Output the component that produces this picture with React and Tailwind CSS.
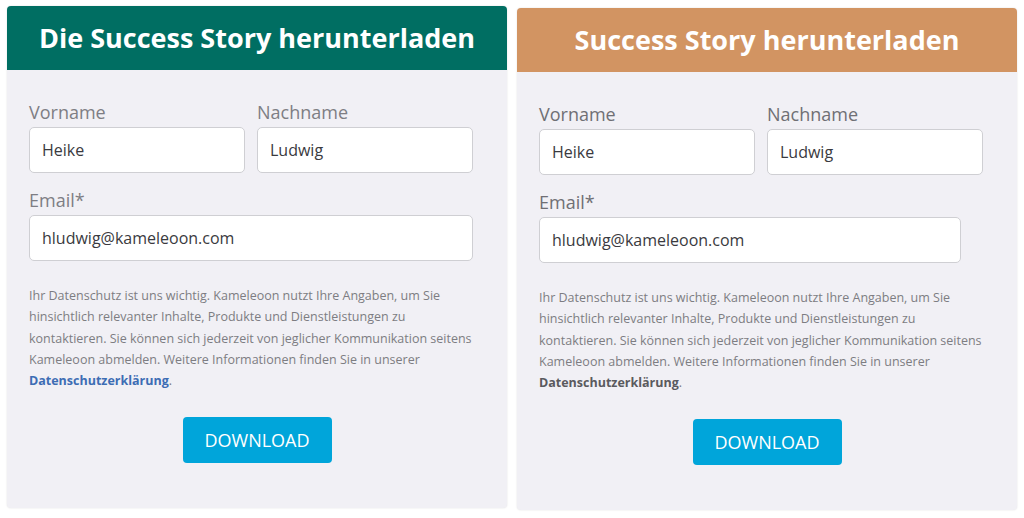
const font = { fontFamily: '"Open Sans", "Noto Sans", sans-serif' };

function Field({ label, value, labelClass, className }) {
  return (
    <div className={className}>
      <label className={`block text-[18px] leading-[24px] ${labelClass}`}>{label}</label>
      <input
        readOnly
        value={value}
        className="mt-[3px] block w-full h-[46px] px-3 bg-white border border-[#cfcfd3] rounded-[5px] text-[16px] text-[#3a3a40] outline-none"
      />
    </div>
  );
}

function DownloadCard({ title, headerClass, labelClass, linkClass, emailClass, className }) {
  return (
    <div className={`w-[500px] bg-[#f1f0f5] rounded-[4px] shadow-[0_0_2px_rgba(0,0,0,0.12)] ${className}`}>
      <div className={`h-[64px] flex items-center justify-center rounded-t-[4px] ${headerClass}`}>
        <h2 className="text-white text-[27px] font-bold">{title}</h2>
      </div>

      <div className="pl-[22px] pr-[34px] pt-[30px] pb-[45px]">
        <div className="grid grid-cols-2 gap-[12px]">
          <Field label="Vorname" value="Heike" labelClass={labelClass} />
          <Field label="Nachname" value="Ludwig" labelClass={labelClass} />
        </div>

        <Field
          label="Email*"
          value="hludwig@kameleoon.com"
          labelClass={labelClass}
          className={`mt-[15px] ${emailClass}`}
        />

        <p className="mt-[24px] text-[12.5px] leading-[21.3px] text-[#7d7d82] whitespace-nowrap">
          Ihr Datenschutz ist uns wichtig. Kameleoon nutzt Ihre Angaben, um Sie
          <br />
          hinsichtlich relevanter Inhalte, Produkte und Dienstleistungen zu
          <br />
          kontaktieren. Sie können sich jederzeit von jeglicher Kommunikation seitens
          <br />
          Kameleoon abmelden. Weitere Informationen finden Sie in unserer
          <br />
          <span className={`font-bold ${linkClass}`}>Datenschutzerklärung</span>.
        </p>

        <div className="mt-[26px] ml-[-22px] mr-[-34px] flex justify-center">
          <button className="w-[149px] h-[46px] rounded-[4px] bg-[#00a5da] text-white text-[18px]">
            DOWNLOAD
          </button>
        </div>
      </div>
    </div>
  );
}

export default function App() {
  return (
    <div className="w-[1024px] h-[518px] bg-white flex items-start gap-[10px] pl-[7px] pt-[6px]" style={font}>
      <DownloadCard
        title="Die Success Story herunterladen"
        headerClass="bg-[#006e62]"
        labelClass="text-[#7e7e84]"
        linkClass="text-[#3d6db4]"
        emailClass="w-full"
      />
      <DownloadCard
        title="Success Story herunterladen"
        headerClass="bg-[#d29462]"
        labelClass="text-[#6f6f74]"
        linkClass="text-[#5a5a5e]"
        emailClass="w-[422px]"
        className="mt-[2px]"
      />
    </div>
  );
}
